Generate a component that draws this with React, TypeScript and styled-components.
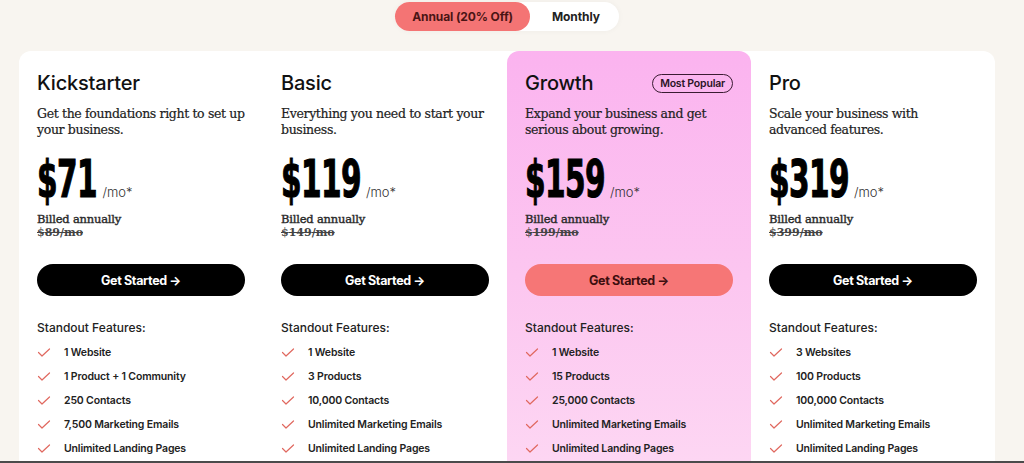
import React from 'react';
import styled, { createGlobalStyle } from 'styled-components';

const GlobalStyle = createGlobalStyle`
  html, body {
    margin: 0;
    padding: 0;
    background: #f8f5f0;
  }
  body {
    font-family: Inter, "Liberation Sans", sans-serif;
    color: #111111;
  }
`;

const Frame = styled.div`
  height: 463px;
  box-sizing: border-box;
  overflow: hidden;
  border-bottom: 2px solid #4b4b4b;
`;

const Page = styled.div`
  width: 1014px;
  height: 100%;
  display: flex;
  flex-direction: column;
  align-items: center;
`;

const Toggle = styled.div`
  margin-top: 2px;
  display: flex;
  align-items: center;
  background: #ffffff;
  border-radius: 15px;
  height: 29px;
  padding-right: 15px;
  box-shadow: 0 0 6px rgba(0, 0, 0, 0.04);
`;

const ToggleOption = styled.div<{ active?: boolean }>`
  height: 29px;
  display: flex;
  align-items: center;
  padding: 0 ${p => (p.active ? 17 : 4)}px;
  margin-left: ${p => (p.active ? 0 : 18)}px;
  border-radius: 15px;
  background: ${p => (p.active ? '#f47474' : 'transparent')};
  color: ${p => (p.active ? '#4a1414' : '#222222')};
  font-size: 12px;
  font-weight: 700;
  letter-spacing: -0.1px;
`;

const Board = styled.div`
  margin-top: 20px;
  width: 976px;
  flex: 1;
  display: grid;
  grid-template-columns: repeat(4, 244px);
  background: #ffffff;
  border-radius: 12px 12px 0 0;
`;

const Column = styled.div<{ featured?: boolean }>`
  padding: 20px 18px 0;
  border-radius: 12px 12px 0 0;
  background: ${p => (p.featured ? 'linear-gradient(180deg, #fbb3ef 0%, #fcc6f0 55%, #fdd6f3 100%)' : 'transparent')};
  display: flex;
  flex-direction: column;
`;

const TitleRow = styled.div`
  display: flex;
  align-items: center;
  justify-content: space-between;
  height: 24px;
`;

const Title = styled.h2`
  margin: 0;
  font-size: 20px;
  font-weight: 500;
  letter-spacing: -0.2px;
  color: #111111;
`;

const Badge = styled.span`
  border: 1px solid #3a1b32;
  border-radius: 11px;
  padding: 2px 7px;
  font-size: 10.5px;
  font-weight: 600;
  letter-spacing: -0.2px;
  color: #2a1425;
`;

const Description = styled.p`
  margin: 11px 0 0;
  font-family: "DejaVu Serif", "Liberation Serif", serif;
  font-size: 12.5px;
  letter-spacing: -0.35px;
  line-height: 16px;
  color: #222222;
  -webkit-text-stroke: 0.2px #222222;
  height: 32px;
`;

const PriceRow = styled.div`
  margin-top: 19px;
  display: flex;
  align-items: baseline;
  gap: 5px;
`;

/* no condensed display face installed: squeeze DejaVu Sans Bold horizontally */
const Price = styled.span<{ chars: number }>`
  display: inline-block;
  font-family: "DejaVu Sans", "Liberation Sans", sans-serif;
  font-weight: 700;
  font-size: 51px;
  line-height: 46px;
  letter-spacing: -1px;
  color: #000000;
  -webkit-text-stroke: 1.2px #000000;
  transform: scaleX(0.58);
  transform-origin: left center;
  margin-right: ${p => -Math.round(p.chars * 34.5 * 0.42)}px;
`;

const Per = styled.span`
  font-size: 13px;
  color: #333333;
  font-weight: 300;
`;

const Billed = styled.div`
  margin-top: 10px;
  font-family: "DejaVu Serif", "Liberation Serif", serif;
  font-size: 11.5px;
  letter-spacing: -0.2px;
  line-height: 13px;
  color: #2a2a2a;
  -webkit-text-stroke: 0.4px #2a2a2a;
`;

const OldPrice = styled.div`
  font-family: "DejaVu Serif", "Liberation Serif", serif;
  font-size: 11px;
  font-weight: 700;
  line-height: 13px;
  color: #444444;
  text-decoration: line-through;
`;

const CTA = styled.button<{ featured?: boolean }>`
  margin-top: 25px;
  height: 32px;
  width: 100%;
  border: none;
  border-radius: 16px;
  background: ${p => (p.featured ? '#f67676' : '#000000')};
  color: ${p => (p.featured ? '#3d0e0e' : '#ffffff')};
  font-family: Inter, "Liberation Sans", sans-serif;
  font-size: 12.5px;
  font-weight: 700;
  letter-spacing: -0.35px;
  cursor: pointer;
`;

const FeaturesHeading = styled.div`
  margin-top: 24px;
  font-size: 12px;
  font-weight: 500;
  color: #222222;
`;

const FeatureList = styled.ul`
  list-style: none;
  margin: 10px 0 0;
  padding: 0;
  display: flex;
  flex-direction: column;
  gap: 10px;
`;

const Feature = styled.li`
  display: flex;
  align-items: center;
  gap: 13px;
  height: 14px;
  font-size: 10.5px;
  font-weight: 600;
  color: #222222;
  letter-spacing: -0.15px;
`;

const Check = () => (
  <svg width="14" height="12" viewBox="0 0 14 12" fill="none">
    <path d="M1.5 6.5 L5 10 L12.5 3" stroke="#e0685f" strokeWidth="1.2" strokeLinecap="round" strokeLinejoin="round" />
  </svg>
);

interface Plan {
  name: string;
  description: string;
  price: number;
  old: number;
  featured?: boolean;
  features: string[];
}

const plans: Plan[] = [
  {
    name: 'Kickstarter',
    description: 'Get the foundations right to set up your business.',
    price: 71,
    old: 89,
    features: ['1 Website', '1 Product + 1 Community', '250 Contacts', '7,500 Marketing Emails', 'Unlimited Landing Pages'],
  },
  {
    name: 'Basic',
    description: 'Everything you need to start your business.',
    price: 119,
    old: 149,
    features: ['1 Website', '3 Products', '10,000 Contacts', 'Unlimited Marketing Emails', 'Unlimited Landing Pages'],
  },
  {
    name: 'Growth',
    description: 'Expand your business and get serious about growing.',
    price: 159,
    old: 199,
    featured: true,
    features: ['1 Website', '15 Products', '25,000 Contacts', 'Unlimited Marketing Emails', 'Unlimited Landing Pages'],
  },
  {
    name: 'Pro',
    description: 'Scale your business with advanced features.',
    price: 319,
    old: 399,
    features: ['3 Websites', '100 Products', '100,000 Contacts', 'Unlimited Marketing Emails', 'Unlimited Landing Pages'],
  },
];

const App: React.FC = () => (
  <>
    <GlobalStyle />
    <Frame>
      <Page>
        <Toggle>
          <ToggleOption active>Annual (20% Off)</ToggleOption>
          <ToggleOption>Monthly</ToggleOption>
        </Toggle>
        <Board>
          {plans.map(plan => {
            const price = `$${plan.price}`;
            return (
              <Column key={plan.name} featured={plan.featured}>
                <TitleRow>
                  <Title>{plan.name}</Title>
                  {plan.featured && <Badge>Most Popular</Badge>}
                </TitleRow>
                <Description>{plan.description}</Description>
                <PriceRow>
                  <Price chars={price.length}>{price}</Price>
                  <Per>/mo*</Per>
                </PriceRow>
                <Billed>Billed annually</Billed>
                <OldPrice>${plan.old}/mo</OldPrice>
                <CTA featured={plan.featured}>Get Started →</CTA>
                <FeaturesHeading>Standout Features:</FeaturesHeading>
                <FeatureList>
                  {plan.features.map(f => (
                    <Feature key={f}>
                      <Check />
                      {f}
                    </Feature>
                  ))}
                </FeatureList>
              </Column>
            );
          })}
        </Board>
      </Page>
    </Frame>
  </>
);

export default App;
